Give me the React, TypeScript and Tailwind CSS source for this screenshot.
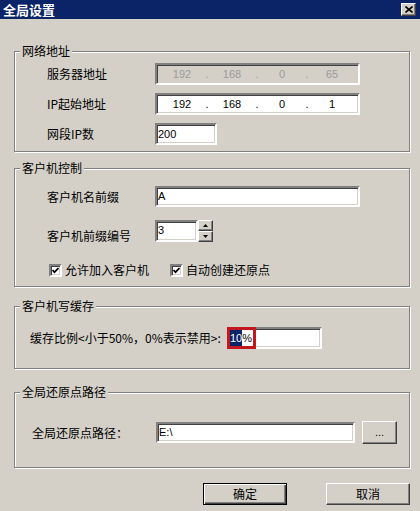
import type { ReactNode } from "react";

const font = "font-['Noto_Sans_CJK_SC','Noto_Sans',sans-serif]";
const latin = "font-['Liberation_Sans','Noto_Sans_CJK_SC',sans-serif]";

const sunken =
  "border-2 border-t-[#808080] border-l-[#808080] border-b-white border-r-white shadow-[inset_1px_1px_0_#404040,inset_-1px_-1px_0_#d4d0c8]";

const raised =
  "border border-t-white border-l-white border-b-[#404040] border-r-[#404040] shadow-[inset_-1px_-1px_0_#808080,inset_1px_1px_0_#d4d0c8]";

function GroupBox({
  title,
  className,
  children,
}: {
  title: string;
  className: string;
  children: ReactNode;
}) {
  return (
    <div
      className={`relative border border-[#808080] shadow-[1px_1px_0_#fff,inset_1px_1px_0_#fff] ${className}`}
    >
      <span className="absolute left-[5px] top-[-9px] bg-[#d4d0c8] px-[2px] text-[12px] leading-[16px] text-black">
        {title}
      </span>
      {children}
    </div>
  );
}

function IpBox({ parts, disabled }: { parts: string[]; disabled?: boolean }) {
  const color = disabled ? "text-[#9a9a9a]" : "text-black";
  return (
    <div
      className={`flex h-[22px] w-[205px] items-center pl-[4px] ${sunken} ${
        disabled ? "bg-[#d4d0c8]" : "bg-white"
      } ${latin} text-[11px] ${color}`}
    >
      {parts.map((p, i) => (
        <div key={i} className="flex items-center">
          <span className="w-[42px] text-center">{p}</span>
          {i < 3 ? <span className="w-[8px] text-center">.</span> : null}
        </div>
      ))}
    </div>
  );
}

function TextBox({
  value,
  className,
}: {
  value: string;
  className: string;
}) {
  return (
    <div
      className={`flex items-center bg-white pl-[1px] ${sunken} ${latin} text-[11px] text-black ${className}`}
    >
      {value}
    </div>
  );
}

function CheckBox({ label }: { label: string }) {
  return (
    <div className="flex items-center gap-[3px]">
      <div
        className={`flex h-[13px] w-[13px] items-center justify-center bg-white ${sunken}`}
      >
        <svg width="7" height="7" viewBox="0 0 7 7">
          <polyline
            points="0.5,3 2.5,5.2 6.5,1"
            fill="none"
            stroke="#000"
            strokeWidth="1.7"
          />
        </svg>
      </div>
      <span className="text-[12px] leading-[14px]">{label}</span>
    </div>
  );
}

function SpinButton({ up }: { up?: boolean }) {
  return (
    <div className={`flex h-[11px] w-[15px] items-center justify-center bg-[#d4d0c8] ${raised}`}>
      <svg width="5" height="3" viewBox="0 0 5 3">
        <polygon points={up ? "2.5,0 5,3 0,3" : "0,0 5,0 2.5,3"} fill="#000" />
      </svg>
    </div>
  );
}

export default function App() {
  return (
    <div
      className={`flex h-[511px] w-[420px] flex-col overflow-hidden bg-[#d4d0c8] text-black ${font}`}
    >
      <div className="flex h-[19px] shrink-0 items-center justify-between bg-[#0b2467] pl-[3px] pr-[4px]">
        <span className="text-[13px] font-bold leading-[19px] text-white">全局设置</span>
        <div className={`flex h-[13px] w-[15px] items-center justify-center bg-[#d4d0c8] ${raised}`}>
          <svg width="8" height="7" viewBox="0 0 8 7">
            <path d="M0.5 0.5 L7.5 6.5 M7.5 0.5 L0.5 6.5" stroke="#000" strokeWidth="1.6" />
          </svg>
        </div>
      </div>

      <div className="flex flex-col pl-[14px] pr-[10px]">
        <GroupBox title="网络地址" className="mt-[32px] pb-[6px] pl-[32px] pt-[11px]">
          <div className="flex flex-col gap-[8px]">
            <div className="flex items-center">
              <span className="w-[108px] text-[12px]">服务器地址</span>
              <IpBox parts={["192", "168", "0", "65"]} disabled />
            </div>
            <div className="flex items-center">
              <span className="w-[108px] text-[12px]">IP起始地址</span>
              <IpBox parts={["192", "168", "0", "1"]} />
            </div>
            <div className="flex items-center">
              <span className="w-[108px] text-[12px]">网段IP数</span>
              <TextBox value="200" className="h-[22px] w-[62px]" />
            </div>
          </div>
        </GroupBox>

        <GroupBox title="客户机控制" className="mt-[16px] pb-[9px] pl-[32px] pt-[17px]">
          <div className="flex items-center">
            <span className="w-[108px] text-[12px]">客户机名前缀</span>
            <TextBox value="A" className="h-[21px] w-[205px]" />
          </div>
          <div className="mt-[9px] flex items-center">
            <span className="w-[108px] pt-[11px] text-[12px]">客户机前缀编号</span>
            <TextBox value="3" className="h-[22px] w-[43px]" />
            <div className="flex flex-col">
              <SpinButton up />
              <SpinButton />
            </div>
          </div>
          <div className="mt-[18px] flex items-center gap-[21px] pl-[2px]">
            <CheckBox label="允许加入客户机" />
            <CheckBox label="自动创建还原点" />
          </div>
        </GroupBox>

        <GroupBox title="客户机写缓存" className="mt-[19px] pb-[19px] pl-[15px] pt-[20px]">
          <div className="flex items-center">
            <span className="w-[197px] whitespace-nowrap text-[12px]">
              缓存比例&lt;小于50%，0%表示禁用&gt;:
            </span>
            <div
              className={`relative flex h-[22px] w-[95px] items-center bg-white pl-[1px] ${sunken} ${latin} text-[11px]`}
            >
              <span className="bg-[#0a246a] text-white">10</span>
              <span>%</span>
              <div className="absolute left-[-2px] top-[-2px] h-[22px] w-[29px] border-[3px] border-[#c3161d]" />
            </div>
          </div>
        </GroupBox>

        <GroupBox title="全局还原点路径" className="mt-[23px] pb-[23px] pl-[17px] pt-[28px]">
          <div className="flex items-center">
            <span className="w-[124px] text-[12px]">全局还原点路径：</span>
            <TextBox value="E:\" className="h-[21px] w-[199px]" />
            <div
              className={`ml-[7px] flex h-[23px] w-[35px] items-center justify-center bg-[#d4d0c8] ${raised} ${latin} text-[11px]`}
            >
              ...
            </div>
          </div>
        </GroupBox>

        <div className="mt-[15px] flex justify-end gap-[39px]">
          <div className="flex h-[22px] w-[84px] items-center justify-center border border-black bg-[#d4d0c8] text-[12px] shadow-[inset_1px_1px_0_#fff,inset_-1px_-1px_0_#404040,inset_-2px_-2px_0_#808080]">
            确定
          </div>
          <div className={`flex h-[22px] w-[84px] items-center justify-center bg-[#d4d0c8] text-[12px] ${raised}`}>
            取消
          </div>
        </div>
      </div>
    </div>
  );
}
